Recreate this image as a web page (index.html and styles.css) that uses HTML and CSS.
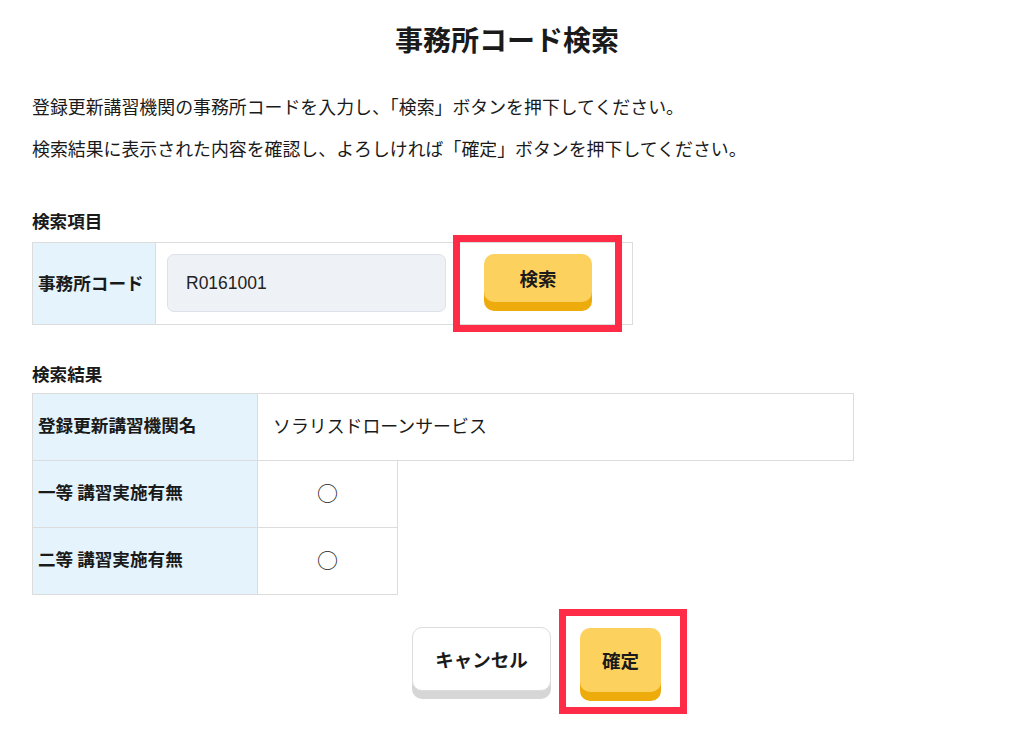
FILE: index.html
```html
<!DOCTYPE html>
<html lang="ja">
<head>
<meta charset="utf-8">
<title>事務所コード検索</title>
<link rel="stylesheet" href="styles.css">
</head>
<body>
<div class="page">
  <h1 class="title">事務所コード検索</h1>
  <div class="intro">
    <p>登録更新講習機関の事務所コードを入力し、「検索」ボタンを押下してください。</p>
    <p>検索結果に表示された内容を確認し、よろしければ「確定」ボタンを押下してください。</p>
  </div>

  <h2 class="section-title sec1">検索項目</h2>
  <div class="search-table">
    <div class="label-cell">事務所コード</div>
    <div class="input-cell">
      <div class="code-input">R0161001</div>
      <div class="highlight hl-search">
        <button class="btn btn-yellow btn-search" type="button">検索</button>
      </div>
    </div>
  </div>

  <h2 class="section-title sec2">検索結果</h2>
  <table class="result-table">
    <colgroup>
      <col class="col-label">
      <col class="col-mark">
      <col class="col-rest">
    </colgroup>
    <tr>
      <th>登録更新講習機関名</th>
      <td class="name-cell" colspan="2">ソラリスドローンサービス</td>
    </tr>
    <tr>
      <th>一等 講習実施有無</th>
      <td class="mark-cell">○</td>
      <td class="empty"></td>
    </tr>
    <tr>
      <th>二等 講習実施有無</th>
      <td class="mark-cell">○</td>
      <td class="empty"></td>
    </tr>
  </table>

  <div class="actions">
    <button class="btn btn-white btn-cancel" type="button">キャンセル</button>
    <div class="highlight hl-confirm">
      <button class="btn btn-yellow btn-confirm" type="button">確定</button>
    </div>
  </div>
</div>
</body>
</html>
```

FILE: styles.css
```css
* { box-sizing: border-box; }

html, body {
  margin: 0;
  padding: 0;
  background: #ffffff;
}

body {
  font-family: "Noto Sans CJK JP", "Noto Sans", sans-serif;
  color: #1a1a1a;
  font-size: 17.5px;
}

.page {
  width: 1024px;
  min-height: 736px;
  padding: 19px 0 40px 32px;
}

.title {
  margin: 0 0 0 -32px;
  width: 1014px;
  text-align: center;
  font-size: 28px;
  font-weight: 700;
  line-height: 40px;
}

.intro {
  margin-top: 26px;
}

.intro p {
  margin: 0;
  line-height: 42px;
  font-size: 17.9px;
}

.section-title {
  margin: 0;
  font-size: 17.6px;
  font-weight: 700;
  line-height: 24px;
}

.sec1 { margin-top: 40px; }
.sec2 { margin-top: 37px; }

.search-table {
  margin-top: 9px;
  width: 601px;
  height: 83px;
  border: 1px solid #dcdcdc;
  display: flex;
}

.label-cell {
  width: 123px;
  background: #e5f3fc;
  border-right: 1px solid #dcdcdc;
  display: flex;
  align-items: center;
  padding: 0 0 3px 5px;
  font-weight: 700;
  font-size: 17.6px;
}

.input-cell {
  flex: 1;
  display: flex;
  align-items: flex-start;
  padding: 11px 0 0 11px;
  gap: 38px;
}

.code-input {
  width: 279px;
  height: 58px;
  background: #eef1f6;
  border: 1px solid #dde2ea;
  border-radius: 7px;
  display: flex;
  align-items: center;
  padding-left: 18px;
  font-family: "Liberation Sans", "Noto Sans CJK JP", sans-serif;
  font-size: 17.5px;
  color: #222;
}

.highlight {
  position: relative;
}

.highlight::after {
  content: "";
  position: absolute;
  border: 7px solid #ff2b47;
  pointer-events: none;
}

.hl-search::after {
  top: -19px;
  right: -30px;
  bottom: -30px;
  left: -31px;
}

.hl-confirm::after {
  top: -18px;
  right: -26px;
  bottom: -22px;
  left: -21px;
}

.btn {
  display: flex;
  align-items: center;
  justify-content: center;
  font-family: "Noto Sans CJK JP", sans-serif;
  font-weight: 700;
  font-size: 18.5px;
  color: #1a1a1a;
  border-radius: 10px;
  padding: 0;
  margin: 0;
  cursor: pointer;
}

.btn-yellow {
  background: #fdd15d;
  border: none;
  box-shadow: 0 9px 0 #eeab0c;
}

.btn-white {
  background: #ffffff;
  border: 1px solid #dcdcdc;
  box-shadow: 0 8px 0 #d6d6d6;
}

.btn-search {
  width: 108px;
  height: 48px;
}

.result-table {
  margin-top: 7px;
  border-collapse: collapse;
  width: 821px;
  table-layout: fixed;
}

.col-label { width: 225px; }
.col-mark { width: 140px; }
.col-rest { width: 456px; }

.result-table th,
.result-table td {
  height: 67px;
  border: 1px solid #dcdcdc;
  padding: 0 0 5px 0;
  font-size: 17.6px;
}

.result-table th {
  background: #e5f3fc;
  text-align: left;
  padding-left: 5px;
  font-weight: 700;
}

.result-table .name-cell {
  padding-left: 15px;
  font-weight: 400;
  font-size: 17.9px;
}

.result-table .mark-cell {
  text-align: center;
  font-size: 21px;
}

.result-table td.empty {
  border: none;
}

.actions {
  margin-top: 32px;
  padding-left: 380px;
  display: flex;
  align-items: flex-start;
  gap: 29px;
}

.btn-cancel {
  width: 139px;
  height: 64px;
}

.btn-confirm {
  width: 81px;
  height: 64px;
  margin-top: 1px;
}
```
